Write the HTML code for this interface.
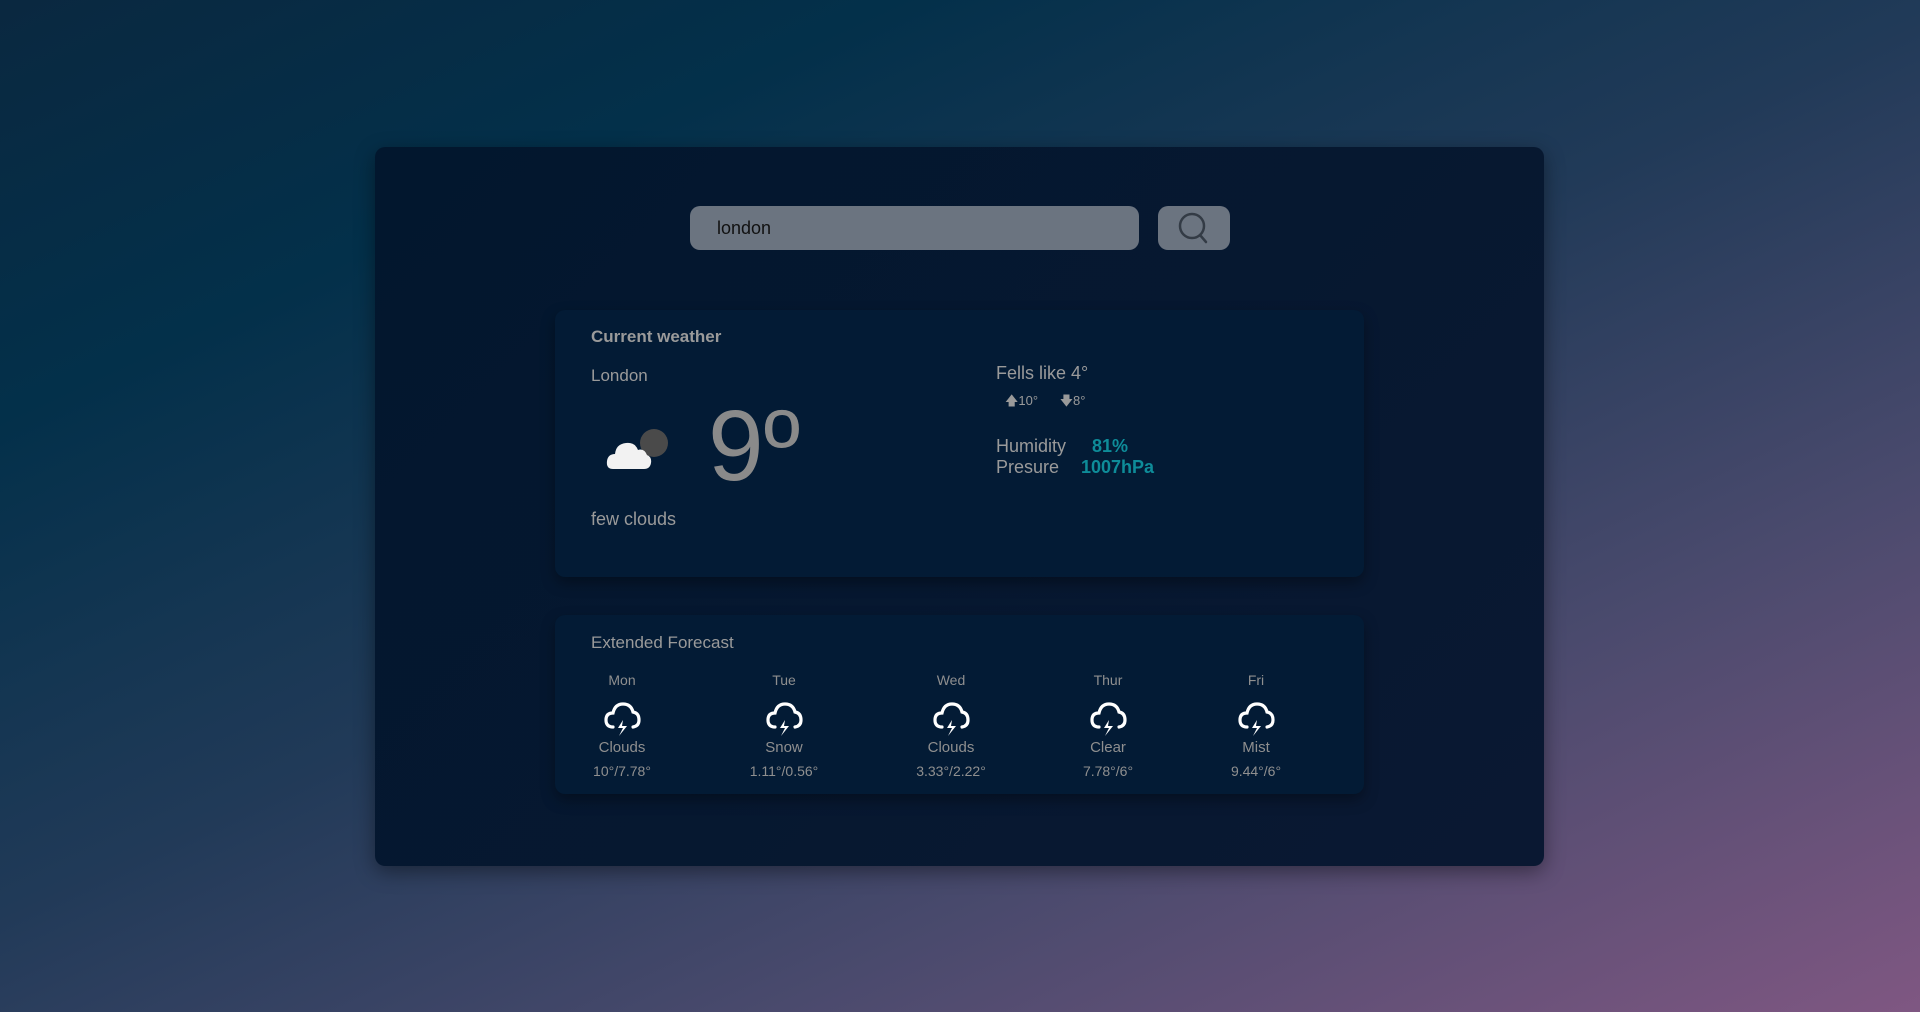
<!DOCTYPE html>
<html><head><meta charset="utf-8"><style>
*{margin:0;padding:0;box-sizing:border-box}
html,body{width:1920px;height:1012px;overflow:hidden}
body{background:linear-gradient(155deg,#0a2840 0%,#03304a 22%,#213a58 48%,#4a4a6d 72%,#7f5782 100%);font-family:"Liberation Sans",sans-serif;position:relative}
.panel{position:absolute;left:375px;top:147px;width:1169px;height:719px;background:linear-gradient(135deg,#02172e,#0a1832);border-radius:10px;box-shadow:0 6px 20px rgba(0,0,0,.4)}
.input{position:absolute;left:690px;top:206px;width:449px;height:44px;background:#6b7480;border-radius:10px;color:#111;font-size:18px;line-height:44px;padding-left:27px}
.btn{position:absolute;left:1158px;top:206px;width:72px;height:44px;background:#6b7480;border-radius:10px}
.card{position:absolute;left:555px;width:809px;background:#031b35;border-radius:10px;box-shadow:0 6px 14px rgba(0,0,0,.35)}
.t{position:absolute;color:#9a9a9a;white-space:nowrap}
.c{position:absolute;text-align:center;width:140px;color:#8f8f8f;white-space:nowrap}
</style></head><body>
<div class="panel"></div>
<div class="input">london</div>
<div class="btn"><svg width="72" height="44" viewBox="0 0 72 44"><circle cx="34" cy="20" r="12" fill="none" stroke="#333b45" stroke-width="2.5"/><line x1="42" y1="29" x2="48" y2="36" stroke="#333b45" stroke-width="2.5" stroke-linecap="round"/></svg></div>
<div class="card" style="top:310px;height:267px"></div>
<div class="card" style="top:615px;height:179px"></div>
<div class="t" style="left:591px;top:327px;font-size:17px;font-weight:bold">Current weather</div>
<div class="t" style="left:591px;top:366px;font-size:17px">London</div>
<svg style="position:absolute;left:604px;top:424px" width="66" height="48" viewBox="0 0 66 48"><circle cx="50" cy="19" r="14" fill="#4a4a4a"/><path d="M9 45 Q2 45 3 37 Q4 30 11 30 Q12 20 22 19 Q31 18 34 26 Q40 24 43 31 Q48 33 47 39 Q46 45 40 45 Z" fill="#f2f2f2"/></svg>
<div class="t" style="left:708px;top:396px;font-size:100px;color:#8a8a8a;line-height:1">9º</div>
<div class="t" style="left:591px;top:509px;font-size:18px">few clouds</div>
<div class="t" style="left:996px;top:363px;font-size:18px">Fells like 4°</div>
<div class="t" style="left:1005px;top:392px;font-size:13px">🡅10°&nbsp;&nbsp;&nbsp;&nbsp;&nbsp;&nbsp;🡇8°</div>
<div class="t" style="left:996px;top:436px;font-size:18px">Humidity</div>
<div class="t" style="left:1092px;top:436px;font-size:18px;color:#0e8c99;font-weight:bold">81%</div>
<div class="t" style="left:996px;top:457px;font-size:18px">Presure</div>
<div class="t" style="left:1081px;top:457px;font-size:18px;color:#0e8c99;font-weight:bold">1007hPa</div>
<div class="t" style="left:591px;top:633px;font-size:17px">Extended Forecast</div>
<div id="f"></div>
<script>
var d=[["Mon","Clouds","10°/7.78°",622],["Tue","Snow","1.11°/0.56°",784],["Wed","Clouds","3.33°/2.22°",951],["Thur","Clear","7.78°/6°",1108],["Fri","Mist","9.44°/6°",1256]];
var h="";d.forEach(function(x){var l=x[3]-70;
h+='<div class="c" style="left:'+l+'px;top:672px;font-size:14px">'+x[0]+'</div>';
h+='<svg style="position:absolute;left:'+(x[3]-20)+'px;top:700px" width="40" height="38" viewBox="0 0 40 38"><path d="M11 27 Q4 27 4 20 Q4 13 11 13 Q13 4 21 4 Q29 4 31 12 Q37 13 37 20 Q37 26 31 27" fill="none" stroke="#fff" stroke-width="3.2" stroke-linecap="round"/><path d="M21 20 L16 28 L21 28 L17 36 L25 26 L20 26 Z" fill="#fff"/></svg>';
h+='<div class="c" style="left:'+l+'px;top:739px;font-size:15px">'+x[1]+'</div>';
h+='<div class="c" style="left:'+l+'px;top:763px;font-size:14px">'+x[2]+'</div>';});
document.getElementById("f").innerHTML=h;
</script>
</body></html>
